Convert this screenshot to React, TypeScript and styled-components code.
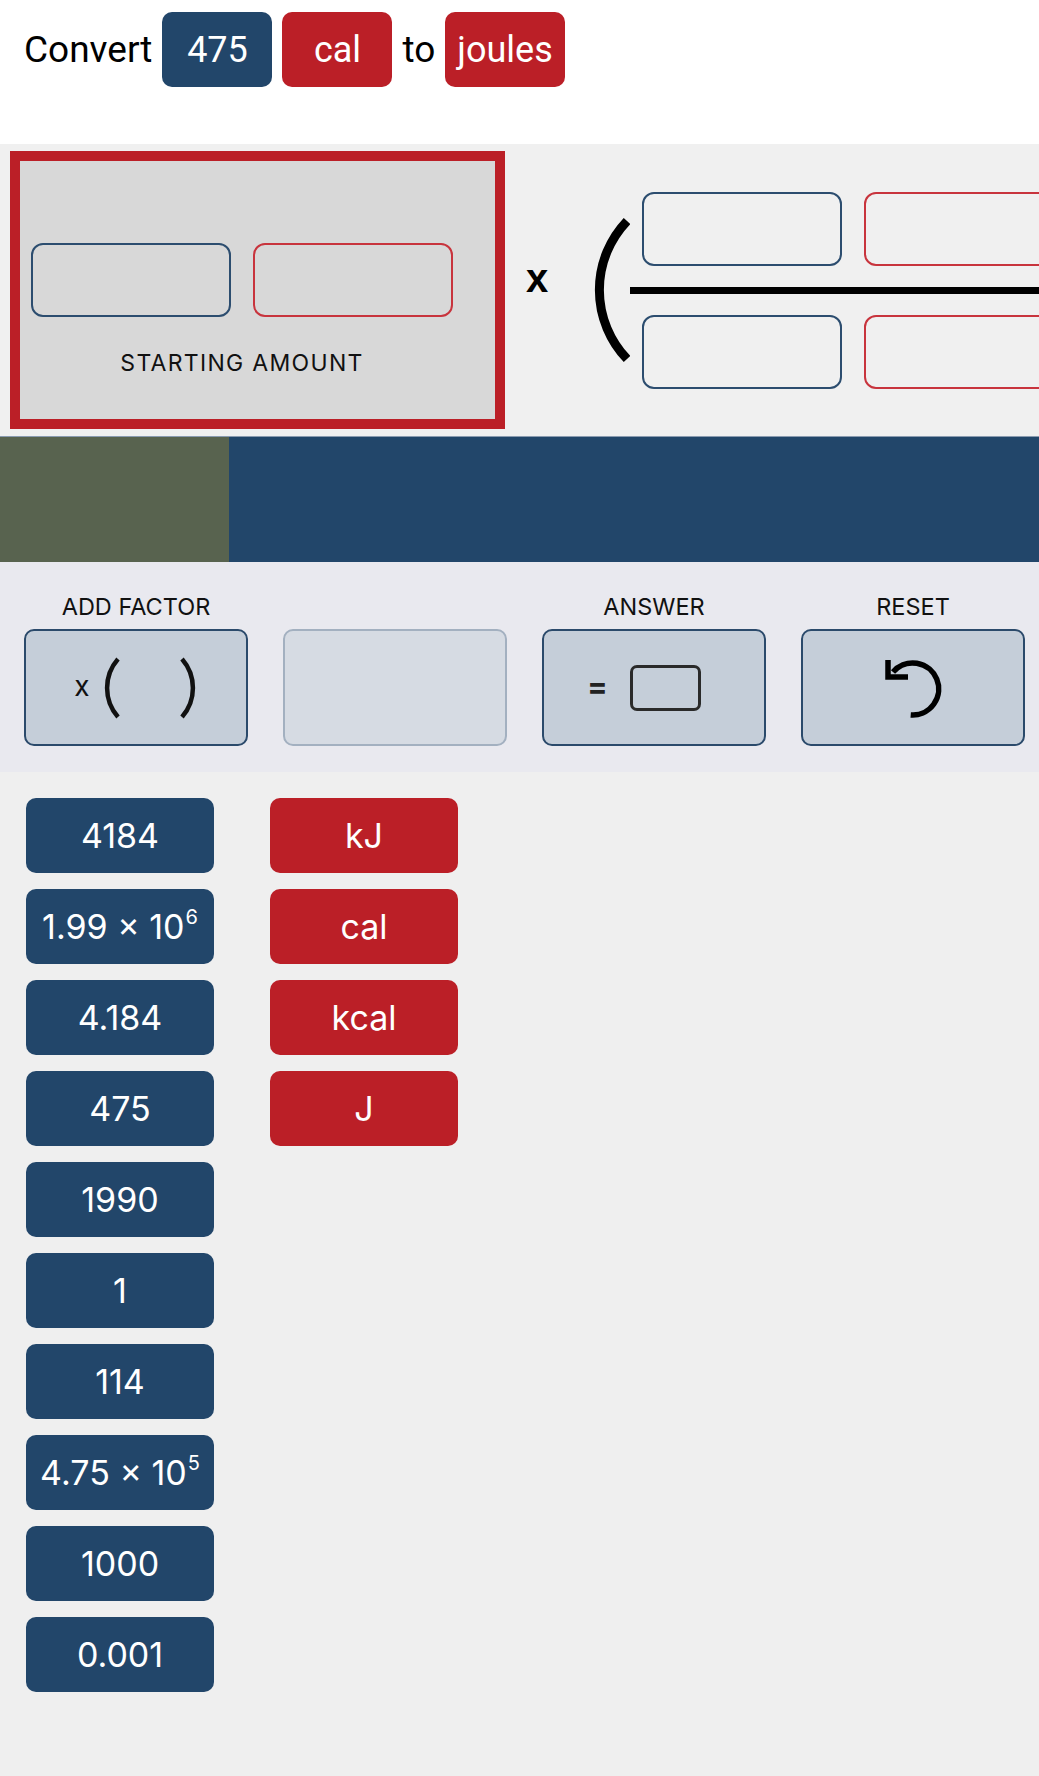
import styled, { createGlobalStyle } from 'styled-components';

const NAVY = '#22466a';
const RED = '#bb1f27';

const GlobalStyle = createGlobalStyle`
  body {
    margin: 0;
    background: #efefef;
    font-family: Inter, 'Liberation Sans', sans-serif;
  }
`;

const values: { base: string; exp?: string }[] = [
  { base: '4184' },
  { base: '1.99 × 10', exp: '6' },
  { base: '4.184' },
  { base: '475' },
  { base: '1990' },
  { base: '1' },
  { base: '114' },
  { base: '4.75 × 10', exp: '5' },
  { base: '1000' },
  { base: '0.001' },
];

const units = ['kJ', 'cal', 'kcal', 'J'];

// share of the problem already solved
const progress = 0.22;

const BigParen = () => (
  <svg width="36" height="150" viewBox="0 0 36 150">
    <path d="M33 6 A100 100 0 0 0 33 144" fill="none" stroke="#000" strokeWidth="9" />
  </svg>
);

const SmallParens = () => (
  <svg width="96" height="62" viewBox="0 0 96 62">
    <path d="M16 2 A44 44 0 0 0 16 60" fill="none" stroke="#111" strokeWidth="4.5" />
    <path d="M80 2 A44 44 0 0 1 80 60" fill="none" stroke="#111" strokeWidth="4.5" />
  </svg>
);

const ResetIcon = () => (
  <svg width="60" height="62" viewBox="0 0 60 62">
    <path d="M10 15 A26 26 0 1 1 27.7 57.9" fill="none" stroke="#000" strokeWidth="5.5" />
    <path d="M5 3 V20 H25" fill="none" stroke="#000" strokeWidth="5.5" />
  </svg>
);

export default function App() {
  return (
    <Page>
      <GlobalStyle />
      <Header>
        <Word>Convert</Word>
        <Chip $tone="value">475</Chip>
        <Chip $tone="unit">cal</Chip>
        <Word>to</Word>
        <Chip $tone="unit">joules</Chip>
      </Header>

      <Workspace>
        <StartFrame>
          <SlotRow>
            <Slot $tone="value" />
            <Slot $tone="unit" />
          </SlotRow>
          <Caption>STARTING AMOUNT</Caption>
        </StartFrame>
        <Times>x</Times>
        <ParenWrap>
          <BigParen />
        </ParenWrap>
        <Fraction>
          <SlotRow>
            <Slot $tone="value" />
            <Slot $tone="unit" />
          </SlotRow>
          <FractionBar />
          <SlotRow>
            <Slot $tone="value" />
            <Slot $tone="unit" />
          </SlotRow>
        </Fraction>
      </Workspace>

      <ProgressTrack>
        <ProgressFill style={{ width: `${progress * 100}%` }} />
      </ProgressTrack>

      <ToolPanel>
        <ToolColumn>
          <ToolLabel>ADD FACTOR</ToolLabel>
          <ToolButton>
            <SmallX>x</SmallX>
            <SmallParens />
          </ToolButton>
        </ToolColumn>
        <ToolColumn>
          <ToolLabel />
          <ToolButton $muted />
        </ToolColumn>
        <ToolColumn>
          <ToolLabel>ANSWER</ToolLabel>
          <ToolButton>
            <Equals>=</Equals>
            <AnswerBox />
          </ToolButton>
        </ToolColumn>
        <ToolColumn>
          <ToolLabel>RESET</ToolLabel>
          <ToolButton>
            <ResetIcon />
          </ToolButton>
        </ToolColumn>
      </ToolPanel>

      <Tray>
        <TileColumn>
          {values.map((v) => (
            <Tile key={v.base + (v.exp ?? '')} $tone="value">
              {v.base}
              {v.exp && <Exp>{v.exp}</Exp>}
            </Tile>
          ))}
        </TileColumn>
        <TileColumn>
          {units.map((u) => (
            <Tile key={u} $tone="unit">
              {u}
            </Tile>
          ))}
        </TileColumn>
      </Tray>
    </Page>
  );
}

//#region styled components
type Tone = { $tone: 'value' | 'unit' };

const Page = styled.div`
  min-height: 100vh;
  background: #efefef;
`;

const Header = styled.header`
  height: 144px;
  box-sizing: border-box;
  background: #fff;
  padding: 12px 24px 0;
  display: flex;
  align-items: flex-start;
  gap: 10px;
`;

const Word = styled.span`
  font-family: Roboto, 'Liberation Sans', sans-serif;
  font-size: 37px;
  line-height: 75px;
  color: #000;
`;

const Chip = styled.span<Tone>`
  height: 75px;
  min-width: 110px;
  box-sizing: border-box;
  padding: 0 12px;
  border-radius: 10px;
  background: ${({ $tone }) => ($tone === 'value' ? NAVY : RED)};
  color: #fff;
  font-family: Roboto, 'Liberation Sans', sans-serif;
  font-size: 36px;
  display: flex;
  align-items: center;
  justify-content: center;
`;

const Workspace = styled.section`
  height: 292px;
  background: #f0f0f0;
  display: flex;
  align-items: center;
  padding-left: 10px;
  overflow: hidden;
`;

const StartFrame = styled.div`
  flex: none;
  width: 495px;
  height: 278px;
  box-sizing: border-box;
  border: 10px solid ${RED};
  background: #d8d8d8;
  padding: 82px 0 0 11px;
  display: flex;
  flex-direction: column;
  align-items: flex-start;
`;

const SlotRow = styled.div`
  display: flex;
  gap: 22px;
`;

const Slot = styled.div<Tone>`
  flex: none;
  width: 200px;
  height: 74px;
  box-sizing: border-box;
  border-radius: 12px;
  border: 2px solid ${({ $tone }) => ($tone === 'value' ? '#2c4d6f' : '#c8343d')};
`;

const Caption = styled.div`
  width: 422px;
  margin-top: 32px;
  text-align: center;
  font-size: 23px;
  line-height: 28px;
  letter-spacing: 1.3px;
  color: #111;
`;

const Times = styled.span`
  flex: none;
  margin: 0 0 24px 21px;
  font-family: 'Liberation Sans', sans-serif;
  font-weight: 700;
  font-size: 40px;
  line-height: 46px;
  color: #000;
`;

const ParenWrap = styled.div`
  flex: none;
  display: flex;
  margin-left: 46px;
`;

const Fraction = styled.div`
  flex: none;
  display: flex;
  flex-direction: column;
  ${SlotRow} {
    padding-left: 12px;
  }
`;

const FractionBar = styled.div`
  height: 7px;
  margin: 21px 0;
  background: #000;
`;

const ProgressTrack = styled.div`
  height: 126px;
  background: ${NAVY};
  border-top: 1px solid #8a9bb0;
  box-sizing: border-box;
`;

const ProgressFill = styled.div`
  height: 100%;
  background: #58634f;
`;

const ToolPanel = styled.section`
  background: #e9e9ef;
  padding: 31px 14px 26px 24px;
  display: grid;
  grid-template-columns: repeat(4, 1fr);
  gap: 35px;
`;

const ToolColumn = styled.div`
  display: flex;
  flex-direction: column;
  align-items: stretch;
`;

const ToolLabel = styled.div`
  height: 28px;
  margin-bottom: 8px;
  text-align: center;
  font-size: 23.5px;
  line-height: 28px;
  color: #111;
`;

const ToolButton = styled.div<{ $muted?: boolean }>`
  height: 117px;
  box-sizing: border-box;
  border-radius: 10px;
  border: 2px solid ${({ $muted }) => ($muted ? '#a3b0c0' : '#2b4a6b')};
  background: ${({ $muted }) => ($muted ? '#d6dbe3' : '#c5ced9')};
  display: flex;
  align-items: center;
  justify-content: center;
`;

const SmallX = styled.span`
  font-size: 28px;
  line-height: 1;
  color: #111;
  margin: 0 12px 4px 0;
`;

const Equals = styled.span`
  font-size: 30px;
  font-weight: 700;
  line-height: 1;
  color: #222;
  margin: 0 22px 4px 0;
`;

const AnswerBox = styled.div`
  width: 71px;
  height: 46px;
  box-sizing: border-box;
  border: 3px solid #2a2a2a;
  border-radius: 7px;
  margin-right: 20px;
`;

const Tray = styled.section`
  padding: 26px;
  display: flex;
  align-items: flex-start;
  gap: 56px;
`;

const TileColumn = styled.div`
  display: flex;
  flex-direction: column;
  gap: 16px;
`;

const Tile = styled.div<Tone>`
  width: 188px;
  height: 75px;
  border-radius: 10px;
  background: ${({ $tone }) => ($tone === 'value' ? NAVY : RED)};
  color: #fff;
  font-size: 34px;
  display: flex;
  align-items: center;
  justify-content: center;
`;

const Exp = styled.span`
  font-size: 20px;
  align-self: flex-start;
  margin-top: 16px;
  margin-left: 1px;
`;
//#endregion
